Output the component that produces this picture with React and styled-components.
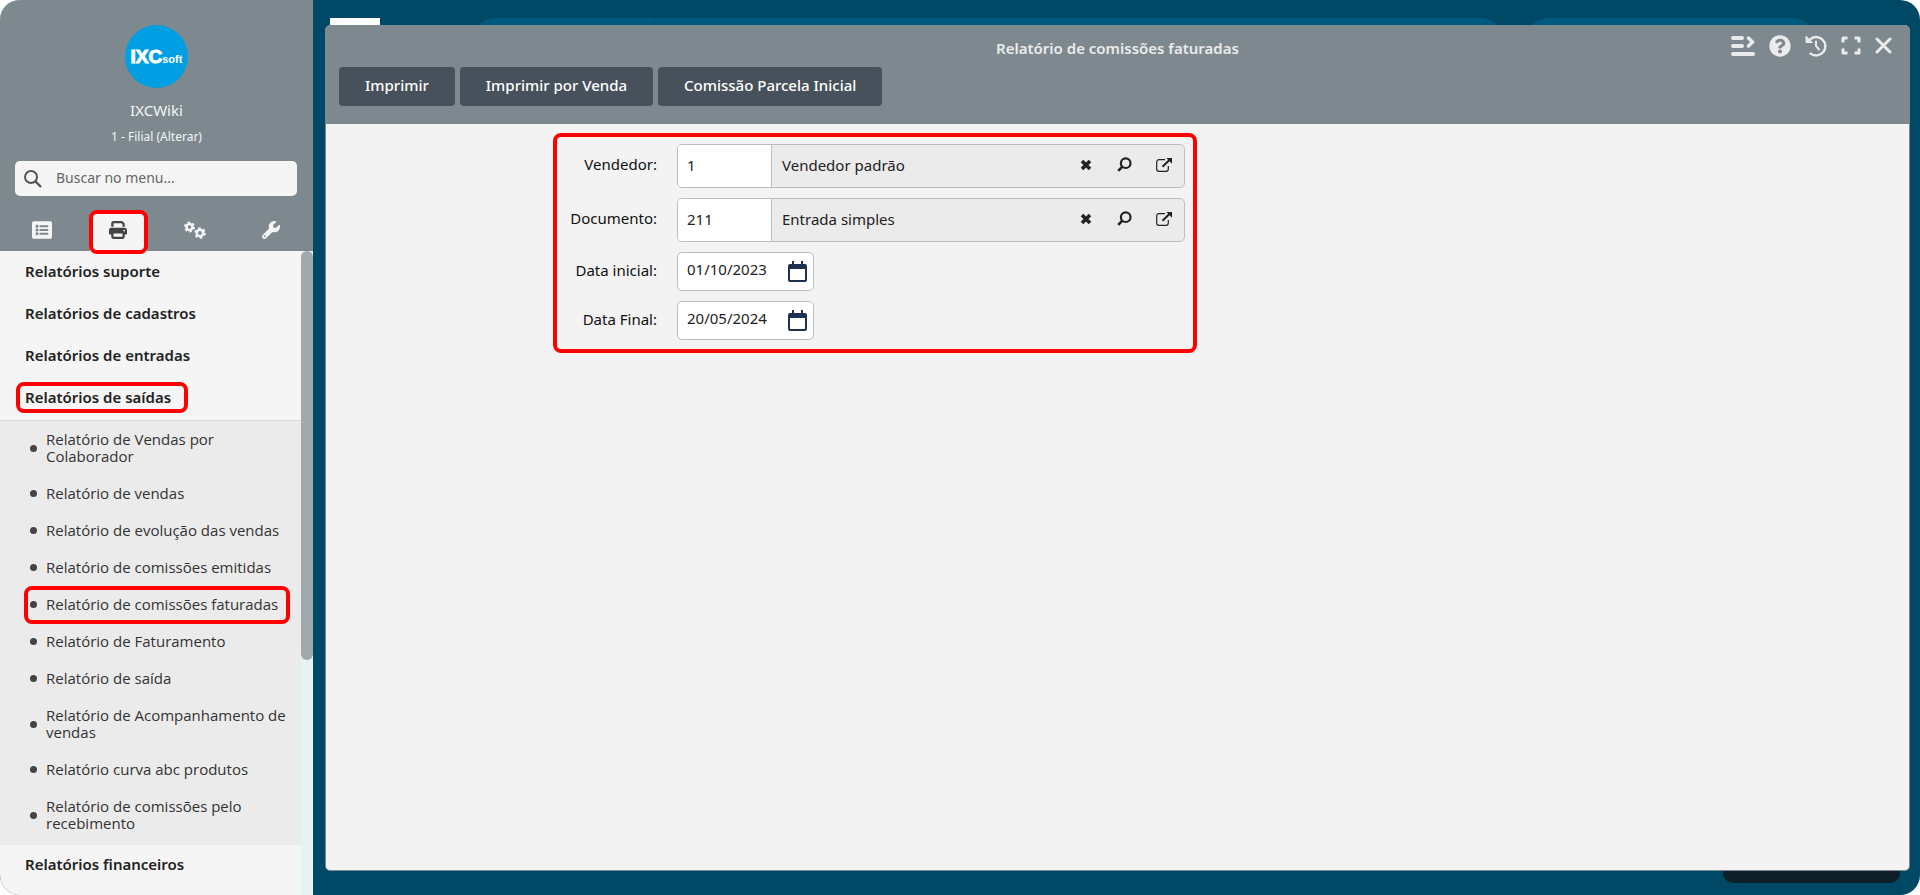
import { useState } from "react";
import { FaListAlt, FaQuestionCircle } from "react-icons/fa";
import { FaPrint, FaWrench } from "react-icons/fa6";
import styled, { createGlobalStyle } from "styled-components";

const MENU = [
  { title: "Relatórios suporte" },
  { title: "Relatórios de cadastros" },
  { title: "Relatórios de entradas" },
  {
    title: "Relatórios de saídas",
    marked: true,
    items: [
      { label: "Relatório de Vendas por Colaborador" },
      { label: "Relatório de vendas" },
      { label: "Relatório de evolução das vendas" },
      { label: "Relatório de comissões emitidas" },
      { label: "Relatório de comissões faturadas", marked: true },
      { label: "Relatório de Faturamento" },
      { label: "Relatório de saída" },
      { label: "Relatório de Acompanhamento de vendas" },
      { label: "Relatório curva abc produtos" },
      { label: "Relatório de comissões pelo recebimento" },
    ],
  },
  { title: "Relatórios financeiros" },
]

const ACTIONS = ["Imprimir", "Imprimir por Venda", "Comissão Parcela Inicial"]

// ICONS ==================================
const SearchIcon = () => (
  <svg width="18" height="18" viewBox="0 0 18 18" fill="none" stroke="#555" strokeWidth="2">
    <circle cx="7" cy="7" r="6" />
    <path d="M11.5 11.5 17 17" strokeWidth="2.4" />
  </svg>
)

const GearsIcon = () => (
  <svg width="22" height="18" viewBox="0 0 22 18" fill="none" stroke="currentColor">
    <circle cx="5.5" cy="6" r="3" strokeWidth="2.6" />
    <circle cx="5.5" cy="6" r="4.6" strokeWidth="1.8" strokeDasharray="2.4 2.417" />
    <circle cx="16" cy="12" r="3.2" strokeWidth="2.6" />
    <circle cx="16" cy="12" r="4.9" strokeWidth="1.8" strokeDasharray="2.6 2.531" />
  </svg>
)

const LookupIcon = () => (
  <svg width="15" height="15" viewBox="0 0 15 15" fill="none" stroke="currentColor">
    <circle cx="8.7" cy="6.2" r="4.8" strokeWidth="2.2" />
    <path d="M5.4 9.6 1.2 13.8" strokeWidth="2.6" />
  </svg>
)

const ClearIcon = () => (
  <svg width="12" height="12" viewBox="0 0 12 12" stroke="currentColor" strokeWidth="3.6">
    <path d="M2 2l8 8M10 2l-8 8" />
  </svg>
)

const OpenIcon = () => (
  <svg width="16" height="14" viewBox="0 0 16 14" fill="none" stroke="currentColor">
    <path d="M9 1.7H3A2.3 2.3 0 0 0 .7 4v7A2.3 2.3 0 0 0 3 13.3h7a2.3 2.3 0 0 0 2.3-2.3V8" strokeWidth="1.2" />
    <path d="M6.5 8.8 13.4 2" strokeWidth="2" />
    <path d="M10.3 0H16v5.7z" fill="currentColor" stroke="none" />
  </svg>
)

const CalendarIcon = () => (
  <svg width="19" height="21" viewBox="0 0 19 21" fill="#1d3050">
    <path d="M4 0h2v3h7V0h2v3h2a2 2 0 0 1 2 2v14a2 2 0 0 1-2 2H2a2 2 0 0 1-2-2V5a2 2 0 0 1 2-2h2zM2 8v11h15V8z" fillRule="evenodd" />
  </svg>
)

const CompactIcon = () => (
  <svg width="24" height="20" viewBox="0 0 24 20" fill="none" stroke="currentColor" strokeWidth="4" strokeLinecap="round">
    <path d="M2 2h9M2 10h9M2 18h20" />
    <path d="M17.5 2l4 4-4 4" strokeWidth="3.4" />
  </svg>
)

const HistoryIcon = () => (
  <svg width="22" height="22" viewBox="0 0 22 22" fill="none" stroke="currentColor" strokeWidth="2.4" strokeLinecap="round">
    <path d="M4.4 5A9.2 9.2 0 1 1 5.6 18.6" />
    <path d="M1 1.5v6h6z" fill="currentColor" strokeWidth="1" strokeLinejoin="round" />
    <path d="M11 6.5V11l3 3.5" strokeWidth="2" />
  </svg>
)

const ExpandIcon = () => (
  <svg width="20" height="19" viewBox="0 0 20 19" fill="none" stroke="currentColor" strokeWidth="3" strokeLinejoin="round">
    <path d="M2 6.5V2h4.5M13.5 2H18v4.5M18 12.5V17h-4.5M6.5 17H2v-4.5" />
  </svg>
)

const CloseIcon = () => (
  <svg width="17" height="17" viewBox="0 0 17 17" stroke="currentColor" strokeWidth="3" strokeLinecap="round">
    <path d="M2 2l13 13M15 2 2 15" />
  </svg>
)

const TABS = [
  { id: "cadastros", label: "Cadastros", icon: <FaListAlt size={ 20 } /> },
  { id: "relatorios", label: "Relatórios", icon: <FaPrint size={ 18 } />, marked: true },
  { id: "configuracoes", label: "Configurações", icon: <GearsIcon /> },
  { id: "ferramentas", label: "Ferramentas", icon: <FaWrench size={ 18 } /> },
]

const WINDOW_CONTROLS = [
  { label: "Compactar", icon: <CompactIcon /> },
  { label: "Ajuda", icon: <FaQuestionCircle size={ 22 } /> },
  { label: "Histórico", icon: <HistoryIcon /> },
  { label: "Tela cheia", icon: <ExpandIcon /> },
  { label: "Fechar", icon: <CloseIcon /> },
]

const Lookup = ({ id, label, code, description }) => {
  const [value, setValue] = useState(code)
  const [text, setText] = useState(description)

  function clear() {
    setValue("")
    setText("")
  }

  return (
    <>
      <FieldLabel htmlFor={ id } $tall>{ label }:</FieldLabel>
      <LookupBox>
        <CodeInput id={ id } value={ value } onChange={ e => setValue(e.target.value) } />
        <Description>{ text }</Description>
        <LookupButton type="button" aria-label="Limpar" onClick={ clear }><ClearIcon /></LookupButton>
        <LookupButton type="button" aria-label="Pesquisar"><LookupIcon /></LookupButton>
        <LookupButton type="button" aria-label="Abrir"><OpenIcon /></LookupButton>
      </LookupBox>
    </>
  )
}

const DateField = ({ id, label, initial }) => {
  const [value, setValue] = useState(initial)

  return (
    <>
      <FieldLabel htmlFor={ id }>{ label }:</FieldLabel>
      <DateBox>
        <DateInput id={ id } value={ value } onChange={ e => setValue(e.target.value) } />
        <PlainButton type="button" aria-label="Abrir calendário"><CalendarIcon /></PlainButton>
      </DateBox>
    </>
  )
}

const Sidebar = () => {
  const [tab, setTab] = useState("relatorios")

  return (
    <Side>
      <SideHeader>
        <Logo>
          <LogoMain>IXC</LogoMain>
          <LogoSub>soft</LogoSub>
        </Logo>
        <UserName>IXCWiki</UserName>
        <Branch href="#alterar">1 - Filial (Alterar)</Branch>
        <Search>
          <SearchIcon />
          <SearchInput type="search" placeholder="Buscar no menu..." aria-label="Buscar no menu" />
        </Search>
        <Tabs>
          {
            TABS.map(t => (
              <Tab
                key={ t.id }
                type="button"
                aria-label={ t.label }
                $active={ t.id === tab }
                $marked={ t.marked }
                onClick={ () => setTab(t.id) }
              >
                { t.icon }
              </Tab>
            ))
          }
        </Tabs>
      </SideHeader>
      <SideBody>
        <Menu>
          {
            MENU.map(group => (
              <div key={ group.title }>
                <GroupTitle href="#menu"><GroupText $marked={ group.marked }>{ group.title }</GroupText></GroupTitle>
                {
                  group.items &&
                  <SubMenu>
                    {
                      group.items.map(item => (
                        <li key={ item.label }>
                          <SubItem href="#menu" $marked={ item.marked }>
                            <Bullet />
                            <span>{ item.label }</span>
                          </SubItem>
                        </li>
                      ))
                    }
                  </SubMenu>
                }
              </div>
            ))
          }
        </Menu>
        <ScrollTrack><ScrollThumb /></ScrollTrack>
      </SideBody>
    </Side>
  )
}

const App = () => (
  <>
    <GlobalStyle />
    <Page>
      <Sidebar />
      <Desktop>
        <TopBar>
          <MenuBlock />
          <SearchPill><PillDivider /></SearchPill>
          <UserPill />
        </TopBar>
        <Toast />
        <Window>
          <WindowHeader>
            <TitleRow>
              <Title>Relatório de comissões faturadas</Title>
              <Controls>
                {
                  WINDOW_CONTROLS.map(c => (
                    <PlainButton key={ c.label } type="button" aria-label={ c.label }>{ c.icon }</PlainButton>
                  ))
                }
              </Controls>
            </TitleRow>
            <Toolbar>
              { ACTIONS.map(a => <ActionButton key={ a } type="button">{ a }</ActionButton>) }
            </Toolbar>
          </WindowHeader>
          <WindowBody>
            <Form>
              <Lookup id="vendedor" label="Vendedor" code="1" description="Vendedor padrão" />
              <Lookup id="documento" label="Documento" code="211" description="Entrada simples" />
              <DateField id="data-inicial" label="Data inicial" initial="01/10/2023" />
              <DateField id="data-final" label="Data Final" initial="20/05/2024" />
            </Form>
          </WindowBody>
        </Window>
      </Desktop>
    </Page>
  </>
)

export default App;

const GlobalStyle = createGlobalStyle`
  * {
    box-sizing: border-box;
  }
  body {
    margin: 0;
    background: #fff;
    font-family: "Noto Sans", "Open Sans", sans-serif;
    font-size: 15px;
    line-height: 20px;
    color: #222;
  }
  button, input {
    font: inherit;
    color: inherit;
  }
  a {
    color: inherit;
    text-decoration: none;
  }
  svg {
    display: block;
  }
`

const Page = styled.div`
  display: flex;
  height: 100vh;
  border-radius: 20px;
  overflow: hidden;
  background: #004966;
`

const Side = styled.aside`
  display: flex;
  flex-direction: column;
  flex: 0 0 313px;
  background: #f5f5f5;
`

const SideHeader = styled.header`
  display: flex;
  flex-direction: column;
  align-items: center;
  padding-top: 25px;
  background: #7d898e;
  color: #f5f5f5;
`

const Logo = styled.div`
  display: flex;
  align-items: baseline;
  justify-content: center;
  width: 63px;
  height: 63px;
  border-radius: 50%;
  background: #009fe3;
  color: #fff;
  font-family: "Liberation Sans", sans-serif;
  font-weight: bold;
  line-height: 63px;
`

const LogoMain = styled.span`
  font-size: 19px;
  -webkit-text-stroke: 1px #fff;
`

const LogoSub = styled.span`
  font-size: 11px;
`

const UserName = styled.div`
  margin-top: 12px;
`

const Branch = styled.a`
  margin: 7px 0 14px;
  font-size: 12px;
`

const Search = styled.label`
  display: flex;
  align-items: center;
  gap: 14px;
  align-self: stretch;
  height: 35px;
  margin: 0 16px 16px 15px;
  padding: 0 9px;
  border-radius: 5px;
  background: #f5f5f5;
`

const SearchInput = styled.input`
  flex: 1;
  min-width: 0;
  padding: 0 0 2px;
  border: 0;
  outline: 0;
  background: none;
  color: #555;
  font-size: 14px;
  &::placeholder {
    color: #666;
    opacity: 1;
  }
`

const Tabs = styled.nav`
  display: flex;
  align-self: stretch;
  padding: 0 4px;
`

const Tab = styled.button`
  position: relative;
  display: flex;
  flex: 1;
  align-items: center;
  justify-content: center;
  height: 39px;
  padding: 0 0 4px;
  border: 0;
  background: none;
  color: #f5f5f5;
  cursor: pointer;
  &::before {
    content: "";
    display: ${ p => p.$active ? 'block' : 'none' };
    position: absolute;
    inset: 0 10px;
    z-index: 0;
    border-radius: 5px 5px 0 0;
    background: #f5f5f5;
  }
  &::after {
    content: "";
    display: ${ p => p.$marked ? 'block' : 'none' };
    position: absolute;
    inset: -2px 9px -3px;
    border: 4px solid #f00;
    border-radius: 8px;
  }
  svg {
    z-index: 1;
    color: ${ p => p.$active ? '#444' : '#f5f5f5' };
  }
`

const SideBody = styled.div`
  display: flex;
  flex: 1;
  min-height: 0;
`

const Menu = styled.nav`
  flex: 1;
  padding-top: 1px;
  overflow: hidden;
`

const GroupTitle = styled.a`
  display: block;
  height: 42px;
  padding: 9px 25px 13px;
  font-weight: 600;
`

const GroupText = styled.span`
  position: relative;
  &::after {
    content: "";
    display: ${ p => p.$marked ? 'block' : 'none' };
    position: absolute;
    inset: -5px -17px -6px -9px;
    border: 4px solid #f00;
    border-radius: 8px;
  }
`

const SubMenu = styled.ul`
  margin: 0;
  padding: 1px 0 2px;
  border-top: 1px solid #dcdcdc;
  background: #ebebeb;
  list-style: none;
`

const SubItem = styled.a`
  position: relative;
  display: flex;
  align-items: center;
  gap: 9px;
  padding: 9px 11px 11px 30px;
  font-family: "Open Sans", "Noto Sans", sans-serif;
  line-height: 17px;
  color: #333;
  &::after {
    content: "";
    display: ${ p => p.$marked ? 'block' : 'none' };
    position: absolute;
    inset: -1px 11px 0 24px;
    border: 4px solid #f00;
    border-radius: 8px;
  }
`

const Bullet = styled.i`
  flex: 0 0 7px;
  height: 7px;
  border-radius: 50%;
  background: #444;
`

const ScrollTrack = styled.div`
  flex: 0 0 12px;
  background: #e8f1f5;
`

const ScrollThumb = styled.div`
  height: 409px;
  border-radius: 6px;
  background: #a1a9ae;
`

const Desktop = styled.main`
  position: relative;
  flex: 1;
  min-width: 0;
`

const TopBar = styled.div`
  display: flex;
  height: 68px;
  padding: 18px 103px 0 17px;
`

const MenuBlock = styled.div`
  flex: 0 0 50px;
  background: #fff;
`

const SearchPill = styled.div`
  flex: 1;
  margin: 0 19px 0 91px;
  border-radius: 25px;
  background: #005a80;
`

const PillDivider = styled.div`
  width: 179px;
  height: 100%;
  border-right: 1px solid #00668c;
`

const UserPill = styled.div`
  flex: 0 0 293px;
  border-radius: 25px;
  background: #005a80;
`

const Toast = styled.div`
  position: absolute;
  right: 20px;
  bottom: 12px;
  width: 177px;
  height: 50px;
  border-radius: 10px;
  background: #0d1f29;
`

const Window = styled.section`
  position: absolute;
  inset: 25px 10px 24px 12px;
  display: flex;
  flex-direction: column;
  border: 1px solid #7d898e;
  border-radius: 5px;
  overflow: hidden;
  background: #f3f3f3;
`

const WindowHeader = styled.header`
  padding: 0 17px 18px 13px;
  background: #7d898e;
  color: #ebebeb;
`

const TitleRow = styled.div`
  display: grid;
  grid-template-columns: 1fr auto 1fr;
  align-items: center;
  height: 41px;
  margin-right: -4px;
`

const Title = styled.h1`
  grid-column: 2;
  margin: 0;
  padding-top: 2px;
  font-size: 15px;
  font-weight: 600;
`

const Controls = styled.div`
  display: flex;
  align-items: center;
  justify-content: flex-end;
  gap: 14px;
  padding: 0 4px 2px 0;
`

const PlainButton = styled.button`
  padding: 0;
  border: 0;
  background: none;
  cursor: pointer;
`

const Toolbar = styled.div`
  display: flex;
  gap: 5px;
`

const ActionButton = styled.button`
  height: 39px;
  padding: 0 26px 4px;
  border: 0;
  border-radius: 4px;
  background: #47515b;
  color: #fff;
  font-weight: 500;
  cursor: pointer;
`

const WindowBody = styled.div`
  flex: 1;
  padding-top: 9px;
`

const Form = styled.form`
  display: grid;
  grid-template-columns: 100px 508px;
  gap: 10px 20px;
  width: 644px;
  margin-left: 227px;
  padding: 7px 8px 9px 0;
  border: 4px solid #f00;
  border-radius: 8px;
`

const FieldLabel = styled.label`
  padding-top: ${ p => p.$tall ? '10px' : '8px' };
  text-align: right;
  color: #111;
`

const LookupBox = styled.div`
  display: flex;
  height: 44px;
  padding-right: 1px;
  border: 1px solid #b9bfc4;
  border-radius: 5px;
  overflow: hidden;
  background: #ebebeb;
`

const CodeInput = styled.input`
  width: 94px;
  padding: 0 9px 2px;
  border: 0;
  border-right: 1px solid #b9bfc4;
  outline: 0;
  background: #fff;
`

const Description = styled.output`
  flex: 1;
  padding: 10px;
`

const LookupButton = styled.button`
  display: flex;
  align-items: center;
  justify-content: center;
  width: 39px;
  padding: 0 0 3px;
  border: 0;
  background: none;
  cursor: pointer;
`

const DateBox = styled.div`
  display: flex;
  align-items: center;
  justify-content: space-between;
  width: 137px;
  height: 39px;
  padding: 0 6px 0 9px;
  border: 1px solid #b9bfc4;
  border-radius: 5px;
  background: #fff;
`

const DateInput = styled.input`
  width: 90px;
  padding: 0 0 5px;
  border: 0;
  outline: 0;
  background: none;
`
